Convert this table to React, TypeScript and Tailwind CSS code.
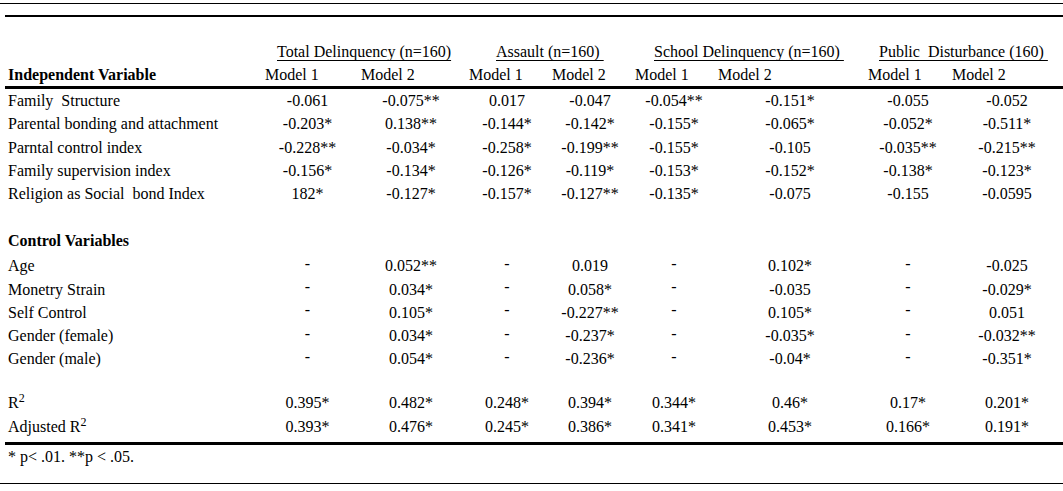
const cols = "grid grid-cols-[255px_105px_102px_90px_76px_92px_140px_96px_102px]";

type Row = { label: string; values: string[] };

const mainRows: Row[] = [
  { label: "Family\u00a0 Structure", values: ["-0.061", "-0.075**", "0.017", "-0.047", "-0.054**", "-0.151*", "-0.055", "-0.052"] },
  { label: "Parental bonding and attachment", values: ["-0.203*", "0.138**", "-0.144*", "-0.142*", "-0.155*", "-0.065*", "-0.052*", "-0.511*"] },
  { label: "Parntal control index", values: ["-0.228**", "-0.034*", "-0.258*", "-0.199**", "-0.155*", "-0.105", "-0.035**", "-0.215**"] },
  { label: "Family supervision index", values: ["-0.156*", "-0.134*", "-0.126*", "-0.119*", "-0.153*", "-0.152*", "-0.138*", "-0.123*"] },
  { label: "Religion as Social\u00a0 bond Index", values: ["182*", "-0.127*", "-0.157*", "-0.127**", "-0.135*", "-0.075", "-0.155", "-0.0595"] },
];

const controlRows: Row[] = [
  { label: "Age", values: ["-", "0.052**", "-", "0.019", "-", "0.102*", "-", "-0.025"] },
  { label: "Monetry Strain", values: ["-", "0.034*", "-", "0.058*", "-", "-0.035", "-", "-0.029*"] },
  { label: "Self Control", values: ["-", "0.105*", "-", "-0.227**", "-", "0.105*", "-", "0.051"] },
  { label: "Gender (female)", values: ["-", "0.034*", "-", "-0.237*", "-", "-0.035*", "-", "-0.032**"] },
  { label: "Gender (male)", values: ["-", "0.054*", "-", "-0.236*", "-", "-0.04*", "-", "-0.351*"] },
];

const fitRows = [
  { label: "R", values: ["0.395*", "0.482*", "0.248*", "0.394*", "0.344*", "0.46*", "0.17*", "0.201*"] },
  { label: "Adjusted R", values: ["0.393*", "0.476*", "0.245*", "0.386*", "0.341*", "0.453*", "0.166*", "0.191*"] },
];

function Cell({ v }: { v: string }) {
  if (v === "-") {
    return (
      <div className="text-center">
        <span className="align-[5px]">-</span>
      </div>
    );
  }
  return <div className="text-center">{v}</div>;
}

function DataRow({ label, values }: { label: React.ReactNode; values: string[] }) {
  return (
    <div className={`${cols} h-[23.25px] items-center`}>
      <div className="pl-[8px]">{label}</div>
      {values.map((v, i) => (
        <Cell key={i} v={v} />
      ))}
    </div>
  );
}

export default function App() {
  return (
    <div className="h-[491px] w-[1063px] overflow-hidden bg-white font-['Liberation_Serif',serif] text-[16px] leading-[23px] text-black">
      <div className="pt-[3px]">
        <div className="h-px bg-black" />
      </div>
      <div className="mt-[11px] ml-[5px] h-[2px] bg-black" />

      {/* group headers */}
      <div className="mt-[23px] grid h-[23px] grid-cols-[277px_219px_158px_225px_1fr] items-center">
        <div />
        <div className="underline underline-offset-[3px]">Total Delinquency (n=160)</div>
        <div className="underline underline-offset-[3px]">Assault (n=160)&nbsp;</div>
        <div className="underline underline-offset-[3px]">School Delinquency (n=160)&nbsp;</div>
        <div className="underline underline-offset-[3px]">Public&nbsp; Disturbance (160)&nbsp;</div>
      </div>

      {/* model labels */}
      <div className="grid h-[23px] grid-cols-[265px_96px_108px_83px_83px_83px_150px_84px_1fr] items-center">
        <div className="pl-[8px] font-bold">Independent Variable</div>
        <div>Model 1</div>
        <div>Model 2</div>
        <div>Model 1</div>
        <div>Model 2</div>
        <div>Model 1</div>
        <div>Model 2</div>
        <div>Model 1</div>
        <div>Model 2</div>
      </div>
      <div className="ml-[5px] h-[3px] bg-black" />

      {mainRows.map((r) => (
        <DataRow key={r.label} label={r.label} values={r.values} />
      ))}
      <div className="h-[23.25px]" />
      <div className={`${cols} h-[23.25px] items-center`}>
        <div className="pl-[8px] font-bold">Control Variables</div>
      </div>
      {controlRows.map((r) => (
        <DataRow key={r.label} label={r.label} values={r.values} />
      ))}
      <div className="h-[23.25px]" />
      {fitRows.map((r) => (
        <DataRow
          key={r.label}
          label={
            <>
              {r.label}
              <sup>2</sup>
            </>
          }
          values={r.values}
        />
      ))}

      <div className="mt-[4px] ml-[5px] h-[3px] bg-black" />
      <div className="h-[24px] pl-[8px] leading-[24px]">* p&lt; .01. **p &lt; .05.</div>
      <div className="mt-[14px] h-px bg-black" />
    </div>
  );
}
